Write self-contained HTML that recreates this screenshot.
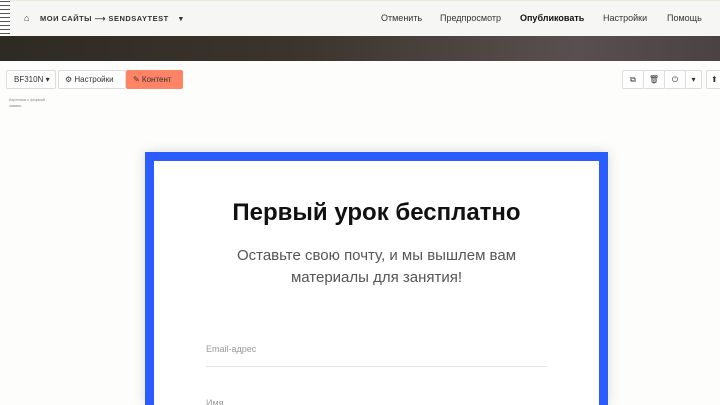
<!DOCTYPE html>
<html><head><meta charset="utf-8"><style>
*{margin:0;padding:0;box-sizing:border-box}
html,body{width:720px;height:405px;overflow:hidden}
body{background:#fdfdfc;font-family:"Liberation Sans",sans-serif;position:relative}
.top{position:absolute;left:0;top:0;width:720px;height:36px;background:#f6f6f5;border-top:1px solid #e6f0d0}
.zig{position:absolute;left:0;top:0;width:10px;height:36px;background:repeating-linear-gradient(0deg,#fff 0 2px,#555 2px 3px,#fff 3px 4px)}
.band{position:absolute;left:0;top:36px;width:720px;height:25px;background:linear-gradient(90deg,#2e2a24 0%,#3a342c 40%,#4e4542 65%,#5a4f50 80%,#4a4244 100%)}
.t{position:absolute;font-size:9px;color:#333;top:13px}
.btn{position:absolute;top:70px;height:19px;border:1px solid #ddd;background:#fff;font-size:8px;color:#333;line-height:17px;border-radius:2px}
.frame{position:absolute;left:145px;top:152px;width:463px;height:253px;background:#2a5cff;box-shadow:0 0 12px rgba(0,0,0,.15)}
.inner{position:absolute;left:154px;top:161px;width:445px;height:244px;background:#fff}
</style></head><body>
<div class="top"></div><div class="zig"></div>
<div class="t" style="left:24px;font-size:9px">&#8962;</div>
<div class="t" style="left:40px;font-size:7.5px;font-weight:bold;letter-spacing:.5px;top:14px">МОИ САЙТЫ ⟶ SENDSAYTEST &nbsp;&nbsp;&nbsp;▾</div>
<div class="t" style="left:381px">Отменить</div>
<div class="t" style="left:440px">Предпросмотр</div>
<div class="t" style="left:520px;font-weight:bold;color:#111">Опубликовать</div>
<div class="t" style="left:603px">Настройки</div>
<div class="t" style="left:667px">Помощь</div>
<div class="band"></div>
<div class="btn" style="left:6px;width:50px;padding-left:7px">BF310N ▾</div>
<div class="btn" style="left:58px;width:68px;padding-left:6px">⚙ Настройки</div>
<div class="btn" style="left:126px;width:57px;background:#ff8466;border-color:#ff8466;padding-left:6px">✎ Контент</div>
<div style="position:absolute;left:9px;top:97px;font-size:4px;color:#888;line-height:6px">Картинка с формой<br>заявки</div>
<div class="btn" style="left:622px;width:22px;text-align:center">⧉</div>
<div class="btn" style="left:643px;width:22px;text-align:center">🗑</div>
<div class="btn" style="left:664px;width:22px;text-align:center">⏻</div>
<div class="btn" style="left:685px;width:17px;text-align:center">▾</div>
<div class="btn" style="left:706px;width:20px;padding-left:4px">⬆</div>
<div class="frame"></div><div class="inner"></div>
<div style="position:absolute;left:154px;width:445px;top:199px;text-align:center;font-size:24px;font-weight:bold;color:#111">Первый урок бесплатно</div>
<div style="position:absolute;left:154px;width:445px;top:245px;text-align:center;font-size:15px;color:#555;line-height:22px">Оставьте свою почту, и мы вышлем вам<br>материалы для занятия!</div>
<div style="position:absolute;left:206px;top:344px;font-size:9px;color:#999">Email-адрес</div>
<div style="position:absolute;left:206px;top:366px;width:341px;height:1px;background:#e2e4ea"></div>
<div style="position:absolute;left:206px;top:398px;font-size:9px;color:#999">Имя</div>
</body></html>
